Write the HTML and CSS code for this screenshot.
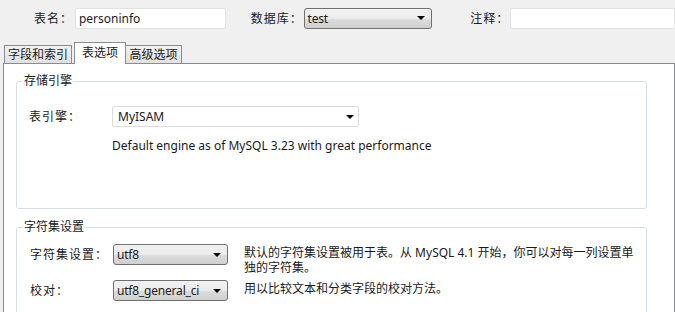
FILE: index.html
```html
<!DOCTYPE html>
<html>
<head>
<meta charset="utf-8">
<link rel="stylesheet" href="styles.css">
</head>
<body>
<div class="top">
  <span class="lbl lbl-name">表名：</span>
  <div class="input input-name">personinfo</div>
  <span class="lbl lbl-db">数据库：</span>
  <div class="select select-db"><span>test</span><i class="arrow"></i></div>
  <span class="lbl lbl-cmt">注释：</span>
  <div class="input input-cmt"></div>
</div>
<div class="tabs">
  <div class="tab tab1">字段和索引</div>
  <div class="tab tab2 active">表选项</div>
  <div class="tab tab3">高级选项</div>
</div>
<div class="panel">
  <div class="group g1">
    <div class="legend">存储引擎</div>
    <div class="row r-engine">
      <span class="rlbl">表引擎：</span>
      <div class="flat-select"><span>MyISAM</span><i class="arrow"></i></div>
    </div>
    <div class="desc">Default engine as of MySQL 3.23 with great performance</div>
  </div>
  <div class="group g2">
    <div class="legend">字符集设置</div>
    <div class="row r-cs">
      <span class="rlbl">字符集设置：</span>
      <div class="select select-sm"><span>utf8</span><i class="arrow"></i></div>
      <div class="note">默认的字符集设置被用于表。从 MySQL 4.1 开始，你可以对每一列设置单<br>独的字符集。</div>
    </div>
    <div class="row r-col">
      <span class="rlbl">校对：</span>
      <div class="select select-sm"><span>utf8_general_ci</span><i class="arrow"></i></div>
      <div class="note">用以比较文本和分类字段的校对方法。</div>
    </div>
  </div>
</div>
</body>
</html>
```
FILE: styles.css
```css
html, body { margin: 0; padding: 0; }
body {
  width: 675px; height: 312px; overflow: hidden;
  background: #f0f0f0;
  font-family: "Noto Sans", "Noto Sans CJK SC", sans-serif;
  font-size: 12px; color: #1a1a1a;
}
.top {
  display: flex; align-items: center;
  height: 34px; padding-top: 1px;
}
.lbl { white-space: nowrap; letter-spacing: 1px; }
.lbl-name { margin-left: 34px; width: 41px; }
.lbl-db { margin-left: 25px; width: 53px; }
.lbl-cmt { margin-left: 38px; width: 40px; }
.input {
  box-sizing: border-box; height: 21px;
  background: #fff; border: 1px solid #e3e3e3; border-radius: 2px;
  padding: 1px 3px; line-height: 17px;
}
.input-name { width: 151px; }
.input-cmt { width: 165px; }
.select {
  box-sizing: border-box; height: 21px;
  display: flex; align-items: center; justify-content: space-between;
  border: 1px solid #707070; border-radius: 3px;
  background: linear-gradient(#f2f2f2 0%, #ebebeb 50%, #dddddd 51%, #cfcfcf 100%);
  padding: 0 6px 0 3px; white-space: nowrap; letter-spacing: -0.2px;
}
.select-db { width: 129px; }
.arrow {
  width: 0; height: 0; flex: none;
  border-left: 4px solid transparent; border-right: 4px solid transparent;
  border-top: 4px solid #000;
}
.tabs {
  display: flex; align-items: flex-end;
  height: 28px; padding-left: 4px; position: relative; z-index: 1;
}
.tab {
  box-sizing: border-box; height: 18px; white-space: nowrap;
  border: 1px solid #898c95; border-bottom: none;
  background: linear-gradient(#f2f2f2, #e1e1e1);
  padding: 0 2px; line-height: 17px; font-size: 12px; text-align: center;
}
.tab1 { width: 68px; margin-right: 2px; }
.tab2 {
  width: 52px; background: #fff; margin-bottom: -1px;
  line-height: 20px; height: 22px;
}
.tab3 { width: 56px; border-left: none; }
.panel {
  box-sizing: border-box;
  margin-left: 3px; width: 672px; height: 250px;
  background: #fff; border: 1px solid #898c95; border-bottom: none;
  padding: 17px 27px 0 12px;
}
.group {
  position: relative;
  border: 1px solid #d5dfe5; border-radius: 3px;
  box-sizing: border-box;
}
.legend {
  position: absolute; top: -9px; left: 6px;
  background: #fff; padding: 0 1px; line-height: 16px;
}
.g1 { height: 128px; padding: 24px 0 0 12px; }
.g2 { height: 90px; margin-top: 18px; padding: 16px 0 0 13px; }
.row { display: flex; align-items: flex-start; }
.rlbl { width: 83px; line-height: 21px; letter-spacing: 1px; }
.flat-select {
  box-sizing: border-box; width: 247px; height: 21px;
  display: flex; align-items: center; justify-content: space-between;
  border: 1px solid #dcdcdc; border-radius: 2px; padding: 0 4px 0 5px;
}
.desc { margin-left: 83px; margin-top: 10px; line-height: 17px; }
.select-sm { width: 115px; }
.note { margin-left: 16px; line-height: 15px; margin-top: 1px; }
.r-col { margin-top: 5px; }
```
